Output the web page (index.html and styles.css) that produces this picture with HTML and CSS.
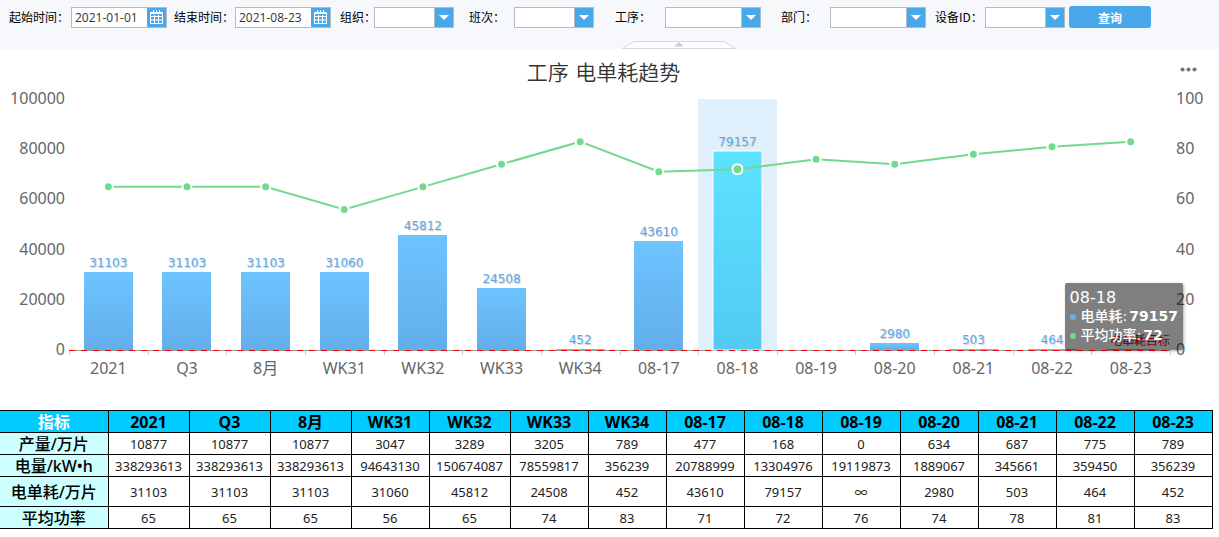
FILE: index.html
```html
<!DOCTYPE html>
<html lang="zh-CN">
<head>
<meta charset="utf-8">
<title>工序 电单耗趋势</title>
<link rel="stylesheet" href="styles.css">
</head>
<body>
<form class="toolbar">
  <label for="start">起始时间：</label>
  <div class="control wide">
    <input id="start" type="text" value="2021-01-01">
    <button class="picker" type="button" aria-label="选择起始时间"><svg width="13" height="14" viewBox="0 0 13 14"><path class="stroke" d="M.5 2.5h12v11H.5zM1 3.500h11M.5 6.500h12M.5 10h12M4.500 5v8M8.500 5v8M3.500 0v4M6.500 0v4M9.500 0v4"/></svg></button>
  </div>
  <label for="end">结束时间：</label>
  <div class="control wide">
    <input id="end" type="text" value="2021-08-23">
    <button class="picker" type="button" aria-label="选择结束时间"><svg width="13" height="14" viewBox="0 0 13 14"><path class="stroke" d="M.5 2.5h12v11H.5zM1 3.500h11M.5 6.500h12M.5 10h12M4.500 5v8M8.500 5v8M3.500 0v4M6.500 0v4M9.500 0v4"/></svg></button>
  </div>
  <label for="org">组织：</label>
  <div class="control"><select id="org"><option></option></select><span class="arrow"></span></div>
  <label for="shift">班次：</label>
  <div class="control"><select id="shift"><option></option></select><span class="arrow"></span></div>
  <label for="process">工序：</label>
  <div class="control wide"><select id="process"><option></option></select><span class="arrow"></span></div>
  <label for="dept">部门：</label>
  <div class="control wide"><select id="dept"><option></option></select><span class="arrow"></span></div>
  <label for="device">设备ID：</label>
  <div class="control"><select id="device"><option></option></select><span class="arrow"></span></div>
  <button class="query" type="submit">查询</button>
  <button class="collapse" type="button" aria-label="收起"><svg width="114" height="8" viewBox="0 0 114 8"><path class="tab" d="M.5 7.5L12 .5h90l11.500 7z"/><path class="mark" d="M57 1l5 4.500H52z"/></svg></button>
</form>

<main>
  <section class="chart">
    <h1>工序 电单耗趋势</h1>
    <button class="more" type="button" aria-label="更多"><svg width="17" height="5" viewBox="0 0 17 5"><circle cx="2.500" cy="2.500" r="2.100"/><circle cx="8.500" cy="2.500" r="2.100"/><circle cx="14.500" cy="2.500" r="2.100"/></svg></button>
    <svg class="plot" id="plot" role="img" aria-label="电单耗与平均功率">
      <defs>
        <linearGradient id="blue" x2="0" y2="1"><stop offset="0" stop-color="#6ec4ff"/><stop offset="1" stop-color="#62aeea"/></linearGradient>
        <linearGradient id="cyan" x2="0" y2="1"><stop offset="0" stop-color="#5ce3ff"/><stop offset="1" stop-color="#52caf2"/></linearGradient>
      </defs>
    </svg>
    <div class="tooltip">
      <div class="tip-title">08-18</div>
      <div class="tip-row"><span class="dot blue"></span>电单耗:<b>79157</b></div>
      <div class="tip-row"><span class="dot green"></span>平均功率:<b>72</b></div>
    </div>
  </section>

  <table>
    <colgroup><col class="c-name"><col class="c-wide" span="3"><col class="c-day"><col class="c-wide"><col class="c-day" span="9"></colgroup>
    <thead>
      <tr><th scope="col">指标</th><th scope="col">2021</th><th scope="col">Q3</th><th scope="col">8月</th><th scope="col">WK31</th><th scope="col">WK32</th><th scope="col">WK33</th><th scope="col">WK34</th><th scope="col">08-17</th><th scope="col">08-18</th><th scope="col">08-19</th><th scope="col">08-20</th><th scope="col">08-21</th><th scope="col">08-22</th><th scope="col">08-23</th></tr>
    </thead>
    <tbody>
      <tr><th scope="row">产量/万片</th><td>10877</td><td>10877</td><td>10877</td><td>3047</td><td>3289</td><td>3205</td><td>789</td><td>477</td><td>168</td><td>0</td><td>634</td><td>687</td><td>775</td><td>789</td></tr>
      <tr><th scope="row">电量/kW•h</th><td>338293613</td><td>338293613</td><td>338293613</td><td>94643130</td><td>150674087</td><td>78559817</td><td>356239</td><td>20788999</td><td>13304976</td><td>19119873</td><td>1889067</td><td>345661</td><td>359450</td><td>356239</td></tr>
      <tr class="tall"><th scope="row">电单耗/万片</th><td>31103</td><td>31103</td><td>31103</td><td>31060</td><td>45812</td><td>24508</td><td>452</td><td>43610</td><td>79157</td><td>∞</td><td>2980</td><td>503</td><td>464</td><td>452</td></tr>
      <tr><th scope="row">平均功率</th><td>65</td><td>65</td><td>65</td><td>56</td><td>65</td><td>74</td><td>83</td><td>71</td><td>72</td><td>76</td><td>74</td><td>78</td><td>81</td><td>83</td></tr>
    </tbody>
  </table>
</main>
<script src="chart.js"></script>
</body>
</html>
```

FILE: styles.css
```css
* { box-sizing: border-box; }

body {
  margin: 0;
  background: #fff;
  font-family: "DejaVu Sans", "Noto Sans CJK SC", sans-serif;
}

button {
  border: 0;
  padding: 0;
  background: none;
  cursor: pointer;
}

.toolbar {
  position: relative;
  display: grid;
  grid-template-columns: 62px 103px 61px 105px 34px 95px 45px 101px 50px 116px 49px 105px 50px 84px 82px;
  align-items: center;
  padding: 6px 9px 21px;
  background: #f6f8fb;
}

.toolbar label {
  color: #000;
  font: 12px/22px "Noto Sans CJK SC", sans-serif;
  white-space: nowrap;
}

.control {
  position: relative;
  display: flex;
  width: 80px;
  height: 21px;
  border: 1px solid #b4bac8;
  background: #fff;
}

.control.wide { width: 96px; }

.control input,
.control select {
  flex: 1;
  min-width: 0;
  border: 0;
  padding: 0 0 0 3px;
  background: #fff;
  color: #333;
  font: 12px "Open Sans", "Noto Sans", sans-serif;
  appearance: none;
}

.picker {
  display: flex;
  align-items: center;
  justify-content: center;
  width: 19px;
  background: #48a8ea;
}

.stroke {
  fill: none;
  stroke: #fff;
}

.arrow {
  position: absolute;
  top: 0;
  right: 0;
  bottom: 0;
  display: grid;
  place-items: center;
  width: 19px;
  border-left: 1px solid #b4bac8;
  background: #48a8ea;
  pointer-events: none;
}

.arrow::after {
  content: "";
  border: 5px solid transparent;
  border-top-color: #fff;
  border-bottom: 0;
}

.query {
  height: 22px;
  border-radius: 3px;
  background: #48a8ea;
  color: #fff;
  font: bold 12px "Noto Sans CJK SC", sans-serif;
}

.collapse {
  position: absolute;
  bottom: 0;
  left: 51%;
  height: 8px;
}

.collapse svg { display: block; }

.tab {
  fill: #fff;
  stroke: #d8d8d8;
}

.mark { fill: #ccc; }

.chart {
  position: relative;
  padding-top: 8px;
}

h1 {
  margin: 0;
  padding-right: 12px;
  color: #333;
  font-size: 21px;
  font-weight: 350;
  line-height: 32px;
  text-align: center;
}

.more {
  position: absolute;
  top: 18px;
  right: 22px;
  line-height: 0;
  fill: #777;
}

.plot {
  display: block;
  width: 100%;
  height: 321px;
}

.axis-text {
  fill: #666;
  font-family: "Noto Sans", "Noto Sans CJK SC", sans-serif;
  font-size: 16px;
}

.value {
  fill: #5aaaea;
  font-size: 12px;
  text-shadow: 1px 1px 1px #ccc;
}

.middle { text-anchor: middle; }
.end { text-anchor: end; }
.band { fill: #dfeffc; }
.bar { fill: url(#blue); }
.bar.active { fill: url(#cyan); stroke: #fff; }
.axis { stroke: #999; }
.tick { stroke: #ccc; }
.target { stroke: #f00; stroke-dasharray: 6 6; }
.target-text { fill: #f00; font-size: 12px; }

.trend {
  fill: none;
  stroke: #73da8d;
  stroke-width: 2;
}

.point {
  fill: #73da8d;
  stroke: #fff;
  stroke-width: 2;
}

.tooltip {
  position: absolute;
  top: 234px;
  right: 36px;
  padding: 5px;
  border-radius: 2px;
  background: rgba(0, 0, 0, .5);
  box-shadow: 1px 1px 3px rgba(0, 0, 0, .3);
  color: #fff;
  font-size: 14px;
  font-weight: 500;
  line-height: 19px;
  white-space: nowrap;
}

.tooltip b { margin-left: 2px; }

.tip-title {
  font-size: 16px;
  font-weight: 400;
}

.tip-row {
  display: flex;
  align-items: center;
}

.dot {
  width: 6px;
  height: 6px;
  margin-right: 5px;
  border-radius: 50%;
}

.dot.blue { background: #64b0ed; }
.dot.green { background: #73da8d; }

table {
  width: calc(100% - 7px);
  border-collapse: collapse;
  table-layout: fixed;
  font-family: "Noto Sans", "Noto Sans CJK SC", sans-serif;
}

.c-name { width: 108px; }
.c-wide { width: 81px; }
.c-day { width: 78px; }

th,
td {
  height: 22px;
  padding: 0;
  border: 1px solid #000;
  text-align: center;
  line-height: 20px;
}

tr > :first-child { border-left: 0; }

td {
  color: #222;
  font-size: 13px;
}

th {
  background: #0cf;
  color: #000;
  font-size: 16px;
  font-weight: 700;
}

thead th:first-child { color: #fff; }

tbody th {
  background: #cff;
  font-weight: 500;
}

.tall > * { height: 30px; }
```

FILE: chart.js
```js
const names = ["2021", "Q3", "8月", "WK31", "WK32", "WK33", "WK34", "08-17", "08-18", "08-19", "08-20", "08-21", "08-22", "08-23"];
const usage = [31103, 31103, 31103, 31060, 45812, 24508, 452, 43610, 79157, null, 2980, 503, 464, 452];
const power = [65, 65, 65, 56, 65, 74, 83, 71, 72, 76, 74, 78, 81, 83];
const active = 8;
const plot = document.getElementById("plot");

function add(parent, tag, className, attrs, text) {
  const node = document.createElementNS("http://www.w3.org/2000/svg", tag);
  node.setAttribute("class", className);
  for (const key in attrs) node.setAttribute(key, attrs[key]);
  if (text !== undefined) node.textContent = text;
  parent.appendChild(node);
}

function draw() {
  const old = plot.querySelector("g");
  if (old) old.remove();
  const g = document.createElementNS("http://www.w3.org/2000/svg", "g");
  plot.appendChild(g);

  const left = 69;
  const right = plot.clientWidth - 49;
  const top = 10;
  const base = 261;
  const height = base - top;
  const step = (right - left) / names.length;
  const center = i => left + step * (i + 0.5);
  const powerY = v => base - v / 100 * height;

  add(g, "rect", "band", { x: Math.round(left + step * active), y: top, width: Math.round(step), height });

  for (let i = 0; i <= 5; i++) {
    const y = base - height * i / 5 + 5;
    add(g, "text", "axis-text end", { x: left - 4, y }, i * 20000);
    add(g, "text", "axis-text", { x: right + 6, y }, i * 20);
  }

  add(g, "line", "axis", { x1: left, x2: right, y1: base + 0.5, y2: base + 0.5 });
  for (let i = 0; i <= names.length; i++) {
    const x = Math.round(left + step * i) + 0.5;
    add(g, "line", "tick", { x1: x, x2: x, y1: base + 1, y2: base + 5 });
  }

  names.forEach((name, i) => {
    add(g, "text", "axis-text middle", { x: center(i), y: base + 24 }, name);
    if (usage[i] === null) return;
    const h = Math.max(1, Math.round(usage[i] / 100000 * height));
    add(g, "rect", i === active ? "bar active" : "bar", { x: Math.round(center(i) - 24.5), y: base - h, width: 49, height: h });
    add(g, "text", "value middle", { x: center(i), y: base - h - 5 }, usage[i]);
  });

  add(g, "line", "target", { x1: left, x2: right, y1: base + 0.5, y2: base + 0.5 });
  add(g, "text", "target-text end", { x: right, y: base - 5 }, "电单耗目标");
  add(g, "polyline", "trend", { points: power.map((v, i) => center(i) + "," + powerY(v)).join(" ") });
  power.forEach((v, i) => add(g, "circle", "point", { cx: center(i), cy: powerY(v), r: i === active ? 5 : 4.5 }));
}

draw();
window.addEventListener("resize", draw);
```
